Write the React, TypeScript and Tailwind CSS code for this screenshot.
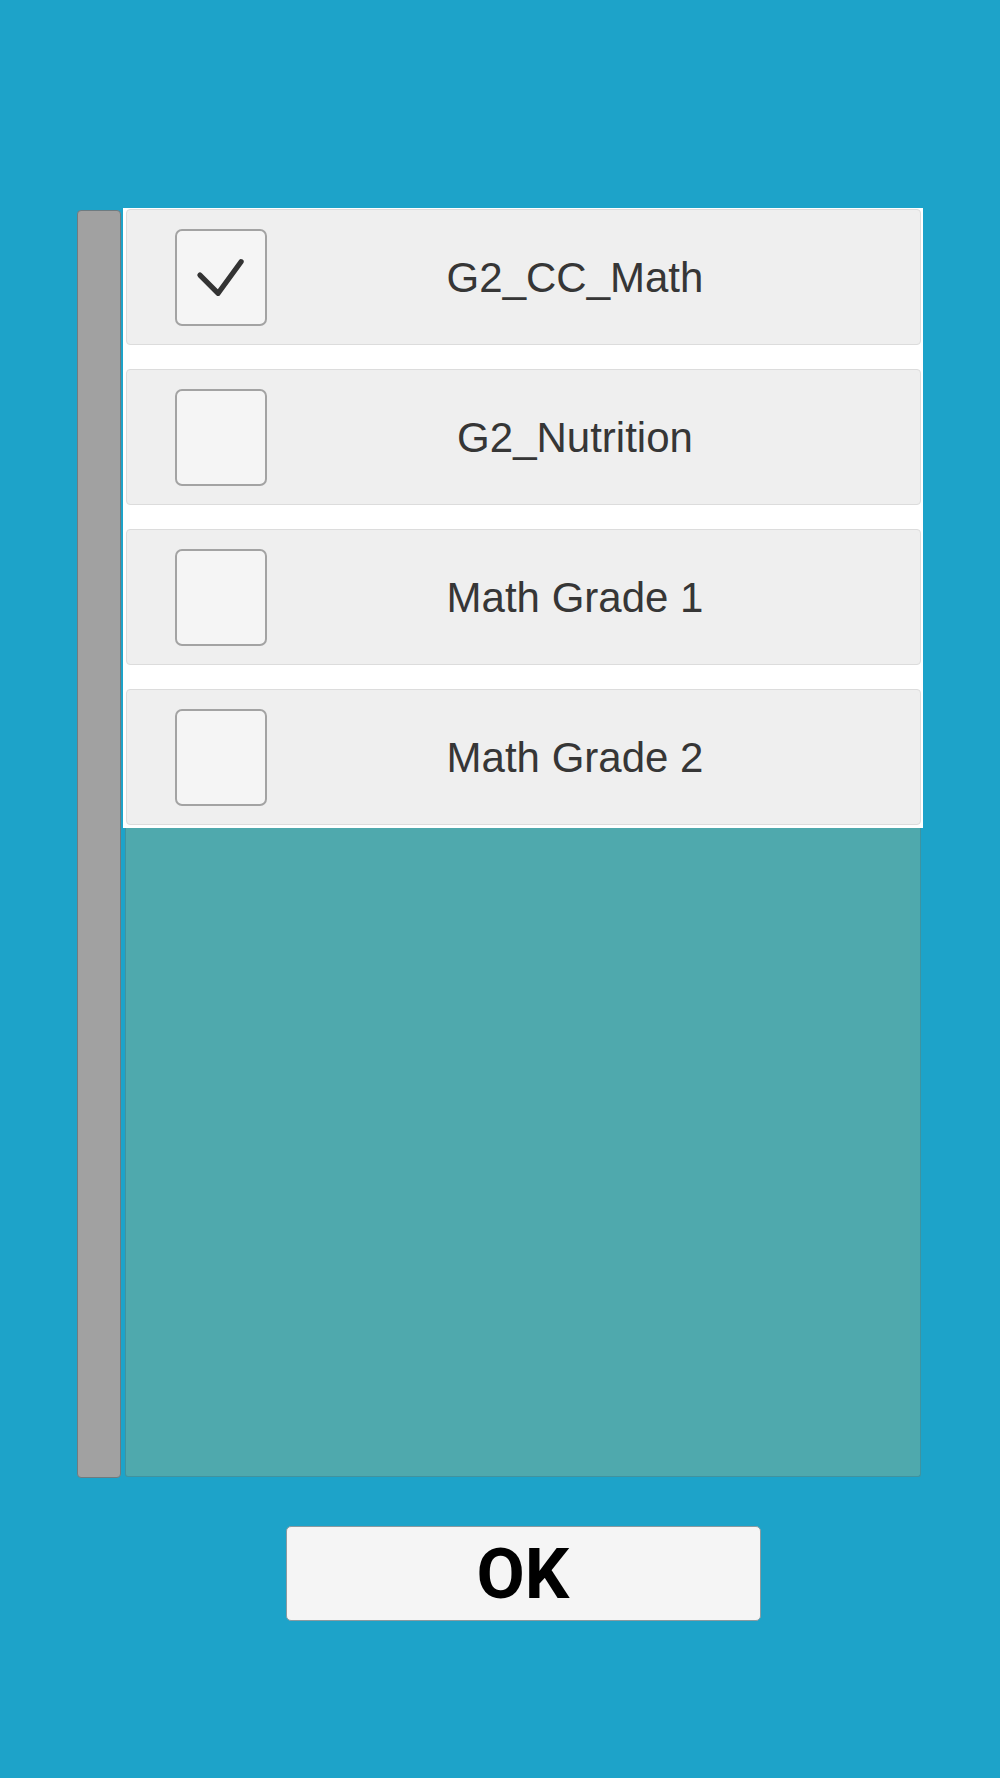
const courses = [
  { name: "G2_CC_Math", checked: true },
  { name: "G2_Nutrition", checked: false },
  { name: "Math Grade 1", checked: false },
  { name: "Math Grade 2", checked: false },
];

function CheckBox({ checked }: { checked: boolean }) {
  return (
    <div className="w-[92px] h-[97px] shrink-0 rounded-[7px] border-2 border-[#a3a3a3] bg-[#f5f5f5] flex items-center justify-center">
      {checked && (
        <svg width="92" height="97" viewBox="0 0 92 97" fill="none">
          <path
            d="M24 46 L43 65 L67 32"
            stroke="#333333"
            strokeWidth="5.5"
            strokeLinecap="round"
            strokeLinejoin="round"
          />
        </svg>
      )}
    </div>
  );
}

export default function App() {
  return (
    <div className="w-full h-[1778px] bg-[#1da3c9] font-['Roboto',sans-serif]">
      <div className="flex pl-[77px] pt-[208px] gap-[2px]">
        {/* Scrollbar */}
        <div className="w-[44px] h-[1268px] mt-[2px] rounded-[4px] bg-[#a1a1a1] border border-[#6f7b80]" />

        <div className="w-[800px] flex flex-col">
          {/* List panel */}
          <div className="h-[1269px] flex flex-col">
            <div className="bg-white pt-px pb-[3px] pl-[3px] pr-[2px] flex flex-col gap-6">
              {courses.map((c) => (
                <div
                  key={c.name}
                  className="h-[136px] flex items-center rounded-[4px] bg-[#efefef] border border-[#dcdcdc] pl-[48px]"
                >
                  <CheckBox checked={c.checked} />
                  <div className="flex-1 text-center pr-[37px] font-['Liberation_Sans',Arial,sans-serif] text-[42px] text-[#363636]">
                    {c.name}
                  </div>
                </div>
              ))}
            </div>
            <div className="flex-1 mx-[2px] bg-[#4fa9ad] rounded-b-[3px] border border-t-0 border-[#3f93a0]" />
          </div>

          {/* OK button */}
          <button className="mt-[49px] mx-auto w-[475px] h-[95px] rounded-[5px] bg-[#f5f5f5] border border-[#8a9aa0] text-[70px] font-bold text-black leading-none flex items-center justify-center">
            OK
          </button>
        </div>
      </div>
    </div>
  );
}
